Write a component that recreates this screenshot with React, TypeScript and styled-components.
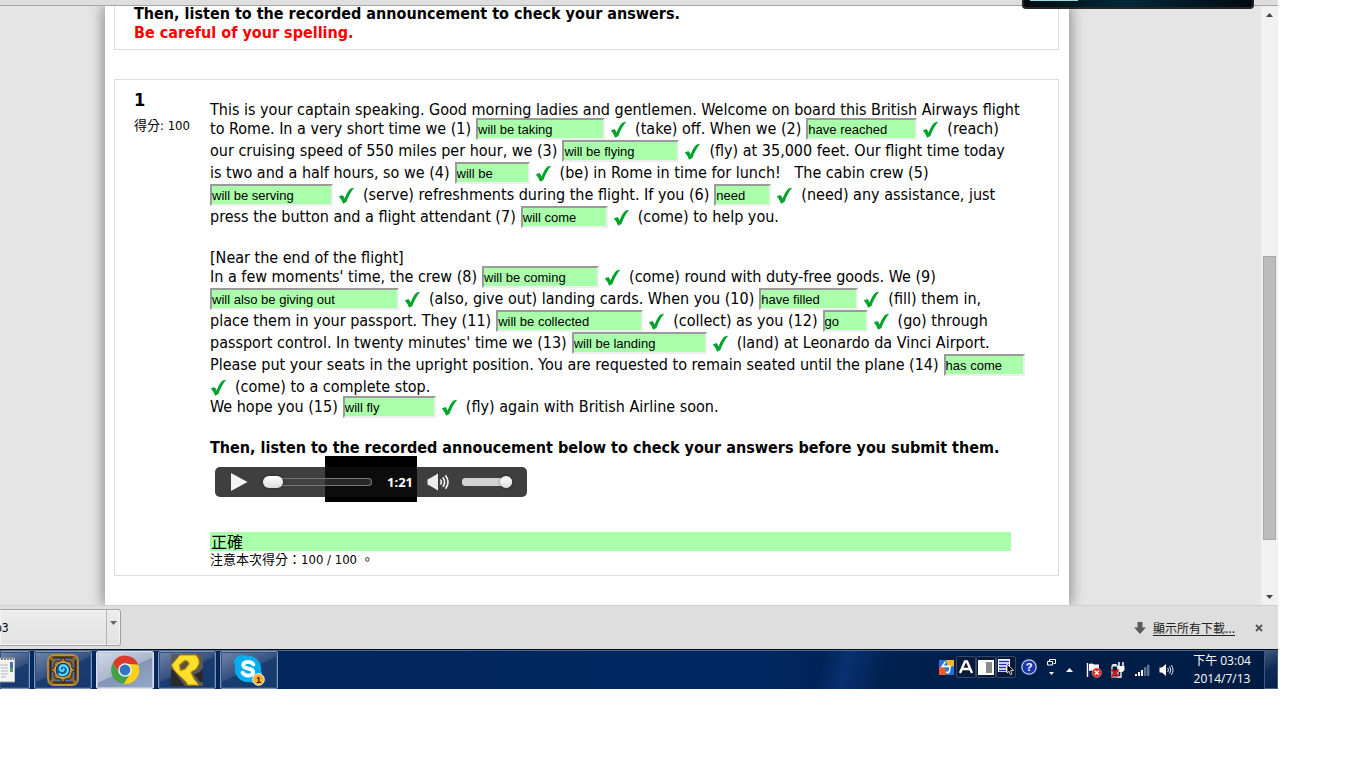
import React from "react";
import styled, { createGlobalStyle, css } from "styled-components";

const bodyFont = `"DejaVu Sans Condensed", "DejaVu Sans", "Noto Sans CJK TC", sans-serif`;
const green = "#aaffaa";

const GlobalStyle = createGlobalStyle`
  * { box-sizing: border-box; }
  body { margin: 0; background: #fff; font-family: ${bodyFont}; font-size: 16px; color: #000; }
  button { padding: 0; border: 0; background: none; font: inherit; color: inherit; }
`;

const Screen = styled.div`
  display: flex;
  flex-direction: column;
  margin-right: 88px;
  min-width: 1100px;
`;

const TopStrip = styled.header`
  position: relative;
  z-index: 2;
  height: 6px;
  background: #dedede;
  border-bottom: 1px solid #a5a5a5;
`;

const Gadget = styled.div`
  position: absolute;
  top: 0;
  right: 24px;
  width: 232px;
  height: 9px;
  border: 2px solid #262626;
  border-top: 0;
  border-radius: 0 0 4px 4px;
  background: linear-gradient(90deg, #000a10, #00293a 45%, #001b27 70%, #000a10);
  &::before {
    content: "";
    display: block;
    width: 48px;
    height: 1px;
    margin-left: 6px;
    background: #a5dbe8;
  }
`;

const View = styled.div`
  display: flex;
  overflow: hidden;
  background: #e5e5e5;
`;

const Sheet = styled.main`
  flex: 1;
  min-width: 0;
  margin: 0 192px 0 105px;
  padding: 0 10px 29px 9px;
  background: #fff;
  box-shadow: 0 0 14px 1px #808080;
`;

const Card = styled.section<{ $open?: boolean }>`
  border: 1px solid #dcdcdc;
  ${(p) =>
    p.$open
      ? css`
          margin: -2px 0 29px;
          padding: 0 19px 7px;
          border-top: 0;
        `
      : css`
          display: flex;
          padding: 19px 47px 6px 19px;
        `}
`;

const Strong = styled.p<{ $color?: string }>`
  margin: 0;
  font-weight: bold;
  line-height: 19px;
  white-space: nowrap;
  color: ${(p) => p.$color || "#000"};
`;

const Info = styled.div`
  flex: 0 0 76px;
`;

const Num = styled.h3`
  margin: -9px 0 0;
  font-size: 18px;
  line-height: 20px;
`;

const Small = styled.div<{ $top?: number }>`
  margin-top: ${(p) => p.$top || 0}px;
  font-size: 13px;
  line-height: 18px;
  white-space: nowrap;
`;

const Body = styled.div`
  flex: 1;
  min-width: 0;
`;

const Row = styled.div<{ $h: number }>`
  display: flex;
  align-items: flex-start;
  height: ${(p) => p.$h}px;
  line-height: 21px;
  white-space: pre;
`;

const Blank = styled.input<{ $w: number }>`
  flex: none;
  width: ${(p) => p.$w}px;
  height: 22px;
  margin-left: 5px;
  padding: 1px 0 0;
  border: 2px solid;
  border-color: #9a9a9a #eeeeee #eeeeee #9a9a9a;
  background: ${green};
  font: 13px "Liberation Sans", sans-serif;
  color: #000;
  &:first-child { margin-left: 0; }
`;

const TickSvg = styled.svg`
  flex: none;
  margin: 3px 8px 0 5px;
  &:first-child { margin-left: 0; }
`;

const Tick = () => (
  <TickSvg width="17" height="17" viewBox="0 0 17 17" role="img" aria-label="correct">
    <path d="M0.8 9.4 L4.4 8 Q5.8 9.4 6.6 11.4 Q9.2 4.4 12.6 1.4 L16.2 0.8 Q11.6 6.2 8.4 15.1 L5.1 16.8 Q3.8 12.4 0.8 9.4Z" fill="#00a42b" />
  </TickSvg>
);

type Part = string | [string, number] | true;
const T: Part = true;
const rows: { h: number; parts: Part[] }[] = [
  { h: 19, parts: ["This is your captain speaking. Good morning ladies and gentlemen. Welcome on board this British Airways flight"] },
  { h: 22, parts: ["to Rome. In a very short time we (1)", ["will be taking", 129], T, "(take) off. When we (2)", ["have reached", 111], T, "(reach)"] },
  { h: 22, parts: ["our cruising speed of 550 miles per hour, we (3)", ["will be flying", 117], T, "(fly) at 35,000 feet. Our flight time today"] },
  { h: 22, parts: ["is two and a half hours, so we (4)", ["will be", 75], T, "(be) in Rome in time for lunch!   The cabin crew (5)"] },
  { h: 22, parts: [["will be serving", 123], T, "(serve) refreshments during the flight. If you (6)", ["need", 57], T, "(need) any assistance, just"] },
  { h: 22, parts: ["press the button and a flight attendant (7)", ["will come", 87], T, "(come) to help you."] },
  { h: 19, parts: [] },
  { h: 19, parts: ["[Near the end of the flight]"] },
  { h: 22, parts: ["In a few moments' time, the crew (8)", ["will be coming", 117], T, "(come) round with duty-free goods. We (9)"] },
  { h: 22, parts: [["will also be giving out", 189], T, "(also, give out) landing cards. When you (10)", ["have filled", 99], T, "(fill) them in,"] },
  { h: 22, parts: ["place them in your passport. They (11)", ["will be collected", 147], T, "(collect) as you (12)", ["go", 45], T, "(go) through"] },
  { h: 22, parts: ["passport control. In twenty minutes' time we (13)", ["will be landing", 135], T, "(land) at Leonardo da Vinci Airport."] },
  { h: 22, parts: ["Please put your seats in the upright position. You are requested to remain seated until the plane (14)", ["has come", 81]] },
  { h: 20, parts: [T, "(come) to a complete stop."] },
  { h: 22, parts: ["We hope you (15)", ["will fly", 93], T, "(fly) again with British Airline soon."] },
  { h: 20, parts: [] },
];

const PlayerArea = styled.div`
  position: relative;
  margin: 10px 0 35px 5px;
`;

const Shade = styled.div`
  position: absolute;
  left: 110px;
  top: -11px;
  width: 92px;
  height: 46px;
  background: #000;
`;

const Player = styled.div`
  position: relative;
  display: flex;
  align-items: center;
  width: 312px;
  height: 30px;
  padding: 0 15px 0 16px;
  border-radius: 5px;
  background: rgba(15, 15, 15, 0.8);
  svg { display: block; }
`;

const Time = styled.span`
  width: 25px;
  margin: 0 15px;
  font: bold 13px "Open Sans", sans-serif;
  color: #fff;
`;

const Slider = styled.input<{ $w: number; $thumb: number; $gap: number; $fill: string; $edge: string }>`
  appearance: none;
  flex: none;
  width: ${(p) => p.$w}px;
  height: 8px;
  margin: 0 0 0 ${(p) => p.$gap}px;
  border-radius: 4px;
  box-shadow: inset 0 0 0 1px ${(p) => p.$edge};
  background: ${(p) => p.$fill};
  &::-webkit-slider-thumb {
    appearance: none;
    width: ${(p) => p.$thumb}px;
    height: 12px;
    border-radius: 6px;
    background: linear-gradient(#fff, #dcdcdc);
    box-shadow: 0 0 3px rgba(0, 0, 0, 0.5);
  }
`;

const Result = styled.div`
  height: 19px;
  padding-left: 1px;
  background: ${green};
  line-height: 22px;
`;

const Scrollbar = styled.div`
  flex: 0 0 17px;
  display: flex;
  flex-direction: column;
  align-items: center;
  background: #f1f1f1;
  button { flex: 0 0 17px; width: 17px; display: grid; place-items: center; }
`;

const Space = styled.div<{ $grow: number }>`
  flex: ${(p) => p.$grow} 0 0;
`;

const Thumb = styled.div`
  flex: 283 0 0;
  width: 13px;
  border: 1px solid #a8a8a8;
  background: #bcbcbc;
`;

const Downloads = styled.section`
  display: flex;
  align-items: center;
  height: 44px;
  border-top: 1px solid #cfcfcf;
  background: #dedede;
  font-size: 12px;
`;

const FileItem = styled.div`
  display: flex;
  width: 121px;
  height: 37px;
  border: 1px solid #a0a0a0;
  border-left: 0;
  border-radius: 0 3px 3px 0;
  box-shadow: inset 0 0 0 1px #f5f5f5;
  background: linear-gradient(#ececec, #e2e2e2);
`;

const FileName = styled.button`
  flex: 1;
  overflow: hidden;
  text-align: left;
  span { margin-left: -5px; }
`;

const FileMenu = styled.button`
  && {
    width: 14px;
    padding-top: 11px;
    border-left: 1px solid #b4b4b4;
  }
  display: grid;
  justify-items: center;
  align-items: start;
`;

const AllLink = styled.a`
  margin: 0 20px 0 7px;
  color: #222;
  font: 12px/16px "Noto Sans CJK TC", sans-serif;
  text-decoration: underline;
  text-underline-offset: 2px;
`;

const CloseButton = styled.button`
  && { margin-right: 15px; }
  svg { display: block; }
`;

const Taskbar = styled.footer`
  display: flex;
  align-items: stretch;
  height: 40px;
  border-top: 1px solid #050d1c;
  box-shadow: inset 0 1px 0 #4d6a93;
  background: linear-gradient(105deg, transparent 64%, #08316f 66%, #04265c 68%, transparent 69%),
    linear-gradient(90deg, #02265d 0%, #00275f 60%, #001f4c 72%, #001c44 100%);
`;

const Task = styled.button<{ $active?: boolean; $first?: boolean }>`
  && {
    width: ${(p) => (p.$first ? 30 : 58)}px;
    margin: 1px 4px 0 0;
    padding-right: ${(p) => (p.$first ? 14 : 0)}px;
    border: 1px solid ${(p) => (p.$active ? "#dbe4ef" : "#8193b2")};
    ${(p) => p.$first && "border-left: 0;"}
    background: ${(p) =>
      p.$active
        ? "linear-gradient(155deg, #d3dbe8 0%, #a8b5cc 50%, #8394b5 51%, #96a9c9 100%)"
        : "linear-gradient(155deg, #7286aa 0%, #35507f 48%, #193c72 50%, #14396f 100%)"};
  }
  overflow: hidden;
  display: flex;
  align-items: center;
  justify-content: ${(p) => (p.$first ? "flex-end" : "center")};
  border-radius: 2px;
  box-shadow: inset 0 0 0 1px ${(p) => (p.$active ? "#b9c6da" : "#34507f")};
  svg { flex: none; display: block; }
`;

const Tray = styled.div`
  flex: 1;
  display: flex;
  align-items: flex-start;
  justify-content: flex-end;
  padding-top: 6px;
`;

const TrayButton = styled.button<{ $w: number; $r?: number; $boxed?: boolean; $low?: boolean }>`
  && {
    width: ${(p) => p.$w}px;
    height: 22px;
    margin: ${(p) => (p.$low ? 3 : 0)}px ${(p) => p.$r || 0}px 0 0;
    ${(p) =>
      p.$boxed &&
      css`
        border: 1px solid #33496d;
        border-radius: 2px;
        background: #0b1a36;
      `}
  }
  display: grid;
  place-items: center;
  svg { display: block; }
`;

const Clock = styled.div`
  width: 72px;
  margin: -4px 6px 0 0;
  text-align: center;
  color: #fff;
  font: 12px/18px "Open Sans", "Noto Sans CJK TC", sans-serif;
  white-space: nowrap;
`;

const ShowDesktop = styled.button`
  && {
    width: 14px;
    border: 1px solid #40597f;
    background: linear-gradient(150deg, #41597f, #0d2a57 50%, #061f49);
  }
`;

const Arrow = ({ up, color = "#444" }: { up?: boolean; color?: string }) => (
  <svg width="7" height="4" viewBox="0 0 7 4">
    <path d={up ? "M0 4 L3.5 0 L7 4Z" : "M0 0 L3.5 4 L7 0Z"} fill={color} />
  </svg>
);

const HearthIcon = () => (
  <svg width="32" height="32" viewBox="0 0 32 32">
    <rect x="1" y="1" width="30" height="30" rx="6" fill="#5d4520" stroke="#b89045" strokeWidth="1.8" />
    <rect x="4" y="4" width="24" height="24" rx="4" fill="#5c70a8" stroke="#2e2110" strokeWidth="1.2" />
    <path d="M3 3 L9 9 M29 3 L23 9 M3 29 L9 23 M29 29 L23 23" stroke="#8a6a2c" strokeWidth="3" />
    <path d="M16 3 L18.6 7.2 L23 7 L25 10 L24.8 13.4 L29 16 L24.8 18.6 L25 22 L23 25 L18.6 24.8 L16 29 L13.4 24.8 L9 25 L7 22 L7.2 18.6 L3 16 L7.2 13.4 L7 10 L9 7 L13.4 7.2Z" fill="#a8762a" stroke="#33200a" strokeWidth="1" />
    <circle cx="16" cy="16" r="8" fill="#0b2d58" stroke="#e0a845" strokeWidth="1.3" />
    <circle cx="16" cy="16" r="6.6" fill="#0f5e9e" />
    <path d="M12.4 20 Q15 22.4 18.4 20.4 Q22.4 17.4 20 13.4 Q17 10 13.6 12.4 Q11.5 15.3 14.4 16.9 Q17.2 17.2 16.6 14.8" fill="none" stroke="#66dcff" strokeWidth="2" strokeLinecap="round" />
  </svg>
);

const ChromeIcon = () => (
  <svg width="30" height="30" viewBox="0 0 30 30">
    <path d="M2.9 8 A14 14 0 0 0 13.6 28.9 L20.6 18.2 L15 15 L9.4 18.2Z" fill="#43a047" />
    <path d="M13.6 28.9 A14 14 0 0 0 28.2 9.6 L15 8.8 L20.6 18.2Z" fill="#fbd116" />
    <path d="M2.9 8 A14 14 0 0 1 28.3 9.6 L15 8.8 L9.6 18Z" fill="#db3c2d" />
    <circle cx="15" cy="15" r="6.8" fill="#f4f6f9" />
    <circle cx="15" cy="15" r="5.4" fill="#2f76bd" />
  </svg>
);

const PhoenixIcon = () => (
  <svg width="32" height="32" viewBox="0 0 32 32">
    <rect width="32" height="32" fill="#5a5a59" />
    <path d="M0 15 L3 17 L14 32 H0Z M22 20 Q28 20 32 14 V28 H29 L23 20Z" fill="#2a2a2b" />
    <path d="M0.5 11 L9 1 L25 1 Q29 5 28 10 Q26 16 20 18 L20.5 20 Q23 26 28 31 L17 31 Q15 27 10 23 Q4 18 2 14Z" fill="#ffdf2b" stroke="#b98700" strokeWidth="1" />
    <path d="M8.5 11 L14 6.5 Q18 7 18 10 L14 15 L9.5 16.5Z" fill="#57534a" stroke="#b98700" strokeWidth="1.2" />
  </svg>
);

const SkypeIcon = () => (
  <svg width="34" height="34" viewBox="0 0 34 34">
    <circle cx="16" cy="16" r="13.2" fill="#00aff0" />
    <circle cx="10" cy="9.5" r="7.8" fill="#00aff0" />
    <circle cx="22" cy="22" r="8" fill="#00aff0" />
    <path d="M21.4 11.4 Q19.4 8.9 16 8.9 Q11 9.3 11.2 12.4 Q11.6 14.8 16.4 15.7 Q21.4 16.8 21.2 19.4 Q20.6 22.6 16.4 22.7 Q12.4 22.7 10.6 19.6" fill="none" stroke="#fff" strokeWidth="3.8" strokeLinecap="round" />
    <circle cx="26.5" cy="26.5" r="5.8" fill="#ffb02e" stroke="#fff3d2" strokeWidth="1" />
    <text x="26.5" y="30" fontSize="9" fontWeight="bold" fontFamily="Liberation Sans, sans-serif" textAnchor="middle" fill="#2b1a00">1</text>
  </svg>
);

const DocIcon = () => (
  <svg width="20" height="26" viewBox="0 0 20 26">
    <rect x="0" y="1" width="20" height="24" fill="#f3f3f1" stroke="#8f959c" />
    <path d="M0 2 H19" stroke="#777" strokeWidth="2" strokeDasharray="2 1" />
    <path d="M1 8 H13 M6 11 H13 M6 14 H13 M6 17 H13 M6 20 H11" stroke="#b5b9be" />
    <rect x="15" y="5" width="3" height="10" fill="#3f73ad" />
    <rect x="15" y="11" width="3" height="4" fill="#53a860" />
  </svg>
);

const SANS = "Liberation Sans, sans-serif";

export default function App() {
  let n = 0;
  return (
    <>
      <GlobalStyle />
      <Screen>
        <TopStrip>
          <Gadget />
        </TopStrip>
        <View>
          <Sheet>
            <Card $open>
              <Strong>Then, listen to the recorded announcement to check your answers.</Strong>
              <Strong $color="#ff0000">Be careful of your spelling.</Strong>
            </Card>
            <Card>
              <Info>
                <Num>1</Num>
                <Small $top={7}>得分: 100</Small>
              </Info>
              <Body>
                {rows.map((row, i) => (
                  <Row key={i} $h={row.h}>
                    {row.parts.map((part, j) => {
                      if (part === true) return <Tick key={j} />;
                      if (typeof part === "string") return <span key={j}>{part}</span>;
                      n += 1;
                      return <Blank key={j} $w={part[1]} defaultValue={part[0]} aria-label={`Answer ${n}`} />;
                    })}
                  </Row>
                ))}
                <Strong>Then, listen to the recorded annoucement below to check your answers before you submit them.</Strong>
                <PlayerArea>
                  <Shade />
                  <Player>
                    <button aria-label="Play">
                      <svg width="17" height="20" viewBox="0 0 17 20">
                        <path d="M0 1 L16.5 10 L0 19Z" fill="#f4f4f4" />
                      </svg>
                    </button>
                    <Slider type="range" aria-label="Seek" defaultValue={0} $w={109} $gap={15} $thumb={20} $fill="rgba(70,70,70,.5)" $edge="#777" />
                    <Time>1:21</Time>
                    <button aria-label="Mute">
                      <svg width="23" height="18" viewBox="0 0 23 18">
                        <path d="M0.5 6.5 L3.5 5 L11 0.5 V17.5 L3.5 13 L0.5 11.5Z" fill="#ededed" />
                        <path d="M13.4 6.4 Q15.4 9 13.4 11.6 M15.8 4.2 Q19.4 9 15.8 13.8 M18.4 2.2 Q23.6 9 18.4 15.8" fill="none" stroke="#ededed" strokeWidth="1.7" />
                      </svg>
                    </button>
                    <Slider type="range" aria-label="Volume" defaultValue={100} $w={50} $gap={12} $thumb={12} $fill="#d2d2d2" $edge="#d2d2d2" />
                  </Player>
                </PlayerArea>
                <Result>正確</Result>
                <Small>注意本次得分：100 / 100 。</Small>
              </Body>
            </Card>
          </Sheet>
          <Scrollbar>
            <button aria-label="Scroll up"><Arrow up /></button>
            <Space $grow={234} />
            <Thumb />
            <Space $grow={48} />
            <button aria-label="Scroll down"><Arrow /></button>
          </Scrollbar>
        </View>
        <Downloads>
          <FileItem>
            <FileName><span>p3</span></FileName>
            <FileMenu aria-label="Download options"><Arrow color="#666" /></FileMenu>
          </FileItem>
          <Space $grow={1} />
          <svg width="12" height="12" viewBox="0 0 12 12">
            <path d="M3.5 0 H8.5 V5.5 H12 L6 12 L0 5.5 H3.5Z" fill="#5c5c5c" />
          </svg>
          <AllLink href="#">顯示所有下載...</AllLink>
          <CloseButton aria-label="Close">
            <svg width="8" height="8" viewBox="0 0 8 8"><path d="M1 1 L7 7 M7 1 L1 7" stroke="#555" strokeWidth="1.8" /></svg>
          </CloseButton>
        </Downloads>
        <Taskbar>
          <Task $first aria-label="Document"><DocIcon /></Task>
          <Task aria-label="Hearthstone"><HearthIcon /></Task>
          <Task $active aria-label="Chrome"><ChromeIcon /></Task>
          <Task aria-label="Game"><PhoenixIcon /></Task>
          <Task aria-label="Skype"><SkypeIcon /></Task>
          <Tray>
            <TrayButton $w={16} $r={2} aria-label="Input method">
              <svg width="15" height="15" viewBox="0 0 15 15">
                <rect width="15" height="15" fill="#1b7fe0" />
                <path d="M0 0 H7 L4 7 H0Z" fill="#2f6fe0" /><path d="M7 0 H15 V6 L9 7Z" fill="#f7b52b" /><path d="M0 7 H6 L7 15 H0Z" fill="#ef5a2a" /><path d="M9 9 L15 6 V15 H9Z" fill="#2a6fd8" />
                <path d="M6.6 1.6 L3.2 6.4 H11 Q11 11 9.6 12.8 L7 12" fill="none" stroke="#fff" strokeWidth="1.6" />
              </svg>
            </TrayButton>
            <TrayButton $w={20} $boxed aria-label="Alphanumeric">
              <svg width="14" height="14" viewBox="0 0 14 14"><path d="M1 13 L6 1.5 H8 L13 13 M3.4 9 H10.6" fill="none" stroke="#fff" strokeWidth="2.4" /></svg>
            </TrayButton>
            <TrayButton $w={20} $boxed aria-label="Half width">
              <svg width="16" height="15" viewBox="0 0 16 15"><rect width="16" height="15" fill="#fff" /><rect x="1" y="1" width="7" height="13" fill="#fff" /><rect x="8" y="2" width="6" height="11" fill="#8a8a8a" /></svg>
            </TrayButton>
            <TrayButton $w={20} $r={4} $boxed aria-label="Input options">
              <svg width="16" height="16" viewBox="0 0 16 16">
                <rect x="0" y="0" width="12" height="13" fill="#fff" />
                <path d="M1 2.5 H11 M1 5.5 H11 M1 8.5 H8 M1 11.5 H8" stroke="#1c2fb5" strokeWidth="1.5" />
                <path d="M9 5 L15.5 11.4 L12.6 11.6 L14 15 L12.4 15.6 L11 12.4 L9 14Z" fill="#000" stroke="#fff" strokeWidth=".8" />
              </svg>
            </TrayButton>
            <TrayButton $w={18} $r={8} aria-label="Help">
              <svg width="16" height="16" viewBox="0 0 16 16">
                <circle cx="8" cy="8" r="7.2" fill="#1a37b0" stroke="#c9d2ee" strokeWidth="1.2" />
                <text x="8" y="12" fontSize="11" fontWeight="bold" fontFamily={SANS} textAnchor="middle" fill="#fff">?</text>
              </svg>
            </TrayButton>
            <TrayButton $w={10} $r={8} aria-label="Restore">
              <svg width="9" height="17" viewBox="0 0 9 17">
                <path d="M2.5 3 V0.5 H8.5 V4.5 H6.5 M0.5 2.5 H5.5 V6 H0.5Z" fill="none" stroke="#fff" />
                <path d="M2 13 H7 L4.5 16Z" fill="#fff" />
              </svg>
            </TrayButton>
            <TrayButton $w={10} $r={12} $low aria-label="Show hidden icons"><Arrow up color="#fff" /></TrayButton>
            <TrayButton $w={16} $r={8} $low aria-label="Action center">
              <svg width="16" height="16" viewBox="0 0 16 16">
                <path d="M1.5 1 V15" stroke="#fff" strokeWidth="1.4" />
                <path d="M3 2 Q6 1 8 2.5 H13 V9 H8 Q6 7.8 3 9Z" fill="#fff" />
                <circle cx="10.8" cy="10.8" r="4.7" fill="#d82c20" stroke="#f0a8a0" strokeWidth=".6" />
                <path d="M8.8 8.8 L12.8 12.8 M12.8 8.8 L8.8 12.8" stroke="#fff" strokeWidth="1.5" />
              </svg>
            </TrayButton>
            <TrayButton $w={16} $r={8} $low aria-label="Power">
              <svg width="16" height="16" viewBox="0 0 16 16">
                <path d="M3 4 V2.6 H6 V4 M2 4 H8 V15 H2Z" fill="none" stroke="#fff" strokeWidth="1.2" />
                <path d="M9 0 V4 M13 0 V4" stroke="#fff" strokeWidth="1.5" />
                <path d="M7.5 4 H14.5 V8 L12.5 10 H9.5 L7.5 8Z" fill="#fff" /><path d="M11 9 V15 H7" fill="none" stroke="#fff" strokeWidth="1.3" />
                <path d="M1.5 7.5 L8.5 14.5 M8.5 7.5 L1.5 14.5" stroke="#e01a12" strokeWidth="2.4" />
              </svg>
            </TrayButton>
            <TrayButton $w={16} $r={8} $low aria-label="Network">
              <svg width="15" height="12" viewBox="0 0 15 12">
                <path d="M0 10 H2 V12 H0Z M3 8 H5 V12 H3Z M6 6 H8 V12 H6Z" fill="#fff" />
                <path d="M9.5 3.5 H11 V11.5 H9.5Z M12.5 1 H14 V11.5 H12.5Z" fill="#54678a" stroke="#8593ab" strokeWidth=".6" />
              </svg>
            </TrayButton>
            <TrayButton $w={16} $r={12} $low aria-label="Sound">
              <svg width="15" height="14" viewBox="0 0 15 14">
                <path d="M0.5 4.5 H3 L7 1 V13 L3 9.5 H0.5Z" fill="#fff" />
                <path d="M8.8 5 Q10 7 8.8 9 M10.6 3.4 Q12.8 7 10.6 10.6 M12.4 2 Q15.6 7 12.4 12" fill="none" stroke="#e4e9f2" />
              </svg>
            </TrayButton>
            <Clock>
              <div>下午 03:04</div>
              <div>2014/7/13</div>
            </Clock>
          </Tray>
          <ShowDesktop aria-label="Show desktop" />
        </Taskbar>
      </Screen>
    </>
  );
}
